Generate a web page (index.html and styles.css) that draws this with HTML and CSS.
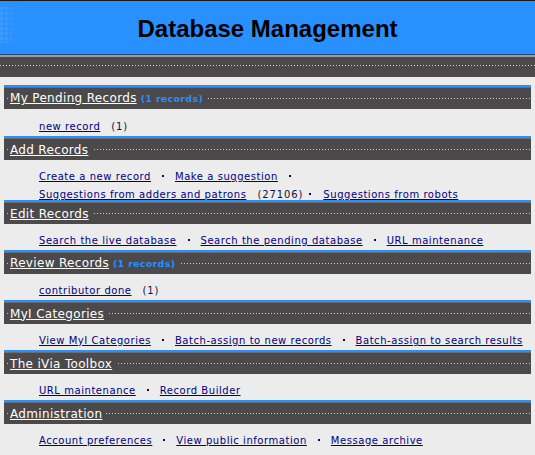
FILE: index.html
```html
<!DOCTYPE html>
<html>
<head>
<meta charset="utf-8">
<link rel="stylesheet" href="styles.css">
</head>
<body>
<div class="masthead">
  <div class="mosaic"></div>
  <h1 class="title">Database Management</h1>
</div>
<div class="band"></div>
<div class="sections">
  <div class="section">
    <div class="shead"><span class="stitle"><a href="#">My Pending Records</a><span class="note">(1 records)</span></span></div>
    <div class="body">
      <div class="row"><a href="#">new record</a><span class="count">(1)</span></div>
    </div>
  </div>
  <div class="section">
    <div class="shead"><span class="stitle"><a href="#">Add Records</a></span></div>
    <div class="body multi">
      <div class="row"><a href="#">Create a new record</a><span class="sep"></span><a href="#">Make a suggestion</a><span class="sep"></span></div>
      <div class="row"><a href="#">Suggestions from adders and patrons</a><span class="count">(27106)</span><span class="sep tight"></span><a href="#">Suggestions from robots</a></div>
    </div>
  </div>
  <div class="section">
    <div class="shead"><span class="stitle"><a href="#">Edit Records</a></span></div>
    <div class="body">
      <div class="row"><a href="#">Search the live database</a><span class="sep"></span><a href="#">Search the pending database</a><span class="sep"></span><a href="#">URL maintenance</a></div>
    </div>
  </div>
  <div class="section">
    <div class="shead"><span class="stitle"><a href="#">Review Records</a><span class="note">(1 records)</span></span></div>
    <div class="body">
      <div class="row"><a href="#">contributor done</a><span class="count">(1)</span></div>
    </div>
  </div>
  <div class="section">
    <div class="shead"><span class="stitle"><a href="#">MyI Categories</a></span></div>
    <div class="body">
      <div class="row"><a href="#">View MyI Categories</a><span class="sep"></span><a href="#">Batch-assign to new records</a><span class="sep"></span><a href="#">Batch-assign to search results</a></div>
    </div>
  </div>
  <div class="section">
    <div class="shead"><span class="stitle"><a href="#">The iVia Toolbox</a></span></div>
    <div class="body">
      <div class="row"><a href="#">URL maintenance</a><span class="sep"></span><a href="#">Record Builder</a></div>
    </div>
  </div>
  <div class="section">
    <div class="shead"><span class="stitle"><a href="#">Administration</a></span></div>
    <div class="body">
      <div class="row"><a href="#">Account preferences</a><span class="sep"></span><a href="#">View public information</a><span class="sep"></span><a href="#">Message archive</a></div>
    </div>
  </div>
</div>
</body>
</html>
```
FILE: styles.css
```css
html, body {
  margin: 0;
  padding: 0;
  background: #ececec;
  font-family: "DejaVu Sans", Verdana, sans-serif;
}
.masthead {
  position: relative;
  height: 53px;
  background: #2890ff;
  border-top: 1px solid #1a1a1a;
  border-bottom: 1px solid #24446a;
  display: flex;
  align-items: center;
  justify-content: center;
}
.mosaic {
  position: absolute;
  left: 0;
  top: 6px;
  width: 20px;
  height: 36px;
  background-image:
    repeating-linear-gradient(to right, rgba(255,255,255,0.06) 0 3px, transparent 3px 5px),
    repeating-linear-gradient(to bottom, rgba(255,255,255,0.06) 0 3px, transparent 3px 5px);
  -webkit-mask-image: linear-gradient(to right, #000, transparent);
  mask-image: linear-gradient(to right, #000, transparent);
}
.title {
  margin: 2px 0 0;
  font-family: "Liberation Sans", Arial, sans-serif;
  font-weight: bold;
  font-size: 24px;
  color: #000;
}
.band {
  height: 20px;
  background-color: #4b4949;
  border-top: 2px solid #9c9c9c;
  background-image: repeating-linear-gradient(to right, #d8d8d8 0 1px, transparent 1px 3px);
  background-size: 100% 1px;
  background-repeat: no-repeat;
  background-position: 0 8px;
}
.sections {
  padding: 8px 4px 0;
}
.shead {
  height: 21px;
  border-top: 2px solid #2690ff;
  box-shadow: inset 0 1px 0 #6e6c6c;
  padding-top: 1px;
  background-color: #4b4949;
  background-image: repeating-linear-gradient(to right, #d0d0d0 0 1px, transparent 1px 3px);
  background-size: 100% 1px;
  background-repeat: no-repeat;
  background-position: 3px 11px;
  display: flex;
  align-items: center;
}
.stitle {
  margin-left: 6px;
  padding-right: 4px;
  background: #4b4949;
  display: flex;
  align-items: baseline;
  line-height: 16px;
}
.stitle a {
  color: #fff;
  font-size: 12px;
  letter-spacing: 0.33px;
  text-decoration: underline;
}
.note {
  color: #2690ff;
  font-weight: bold;
  font-size: 9.5px;
  letter-spacing: 0.3px;
  margin-left: 4px;
}
.body {
  padding: 8px 0 0 35px;
}
.section:first-child .body {
  padding-top: 9px;
}
.row {
  height: 18px;
  line-height: 18px;
  font-size: 10px;
  white-space: nowrap;
  color: #000033;
}
.body.multi .row:last-child {
  height: 14px;
}
.row a {
  color: #000080;
  text-decoration: underline;
  letter-spacing: 0.55px;
}
.count {
  margin-left: 11px;
  color: #101040;
  letter-spacing: 0.9px;
}
.sep {
  display: inline-block;
  width: 2px;
  height: 2px;
  background: #000080;
  margin: 0 11px;
  vertical-align: 3px;
}
.sep.tight {
  margin-left: 6px;
  margin-right: 12px;
}
```
